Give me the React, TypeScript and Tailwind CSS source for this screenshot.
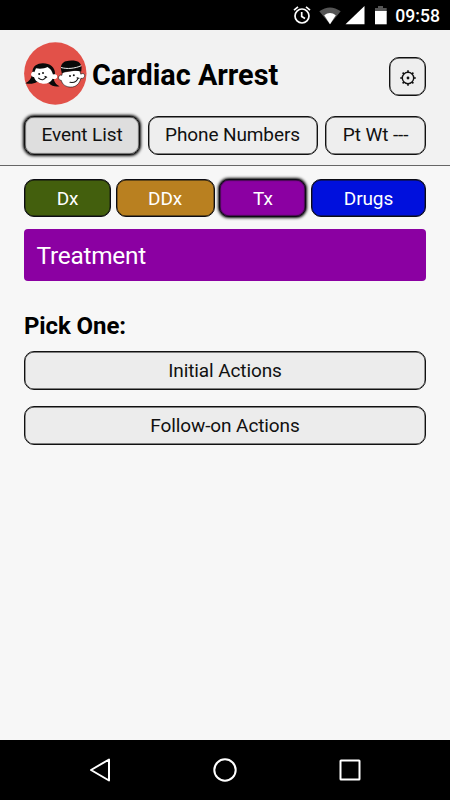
import { clsx } from "clsx";

const navTabs = [
  { label: "Event List", width: "w-[116px]", active: true },
  { label: "Phone Numbers", width: "w-[170px]", active: false },
  { label: "Pt Wt ---", width: "w-[101px]", active: false },
];

const sections = [
  { label: "Dx", className: "w-[87px] bg-[#435f0d]", active: false },
  { label: "DDx", className: "w-[99px] bg-[#b98020]", active: false },
  { label: "Tx", className: "w-[87px] bg-[#8b00a2]", active: true },
  { label: "Drugs", className: "w-[115px] bg-[#0010dd]", active: false },
];

const actions = ["Initial Actions", "Follow-on Actions"];

const baseShadow = "shadow-[inset_0_0_0_0.4px_#111]";
const activeShadow = "shadow-[0_0_3px_1px_#000,inset_0_0_1px_0.5px_#111]";

function StatusBar() {
  return (
    <div className="flex h-[30px] shrink-0 items-center justify-end bg-black pr-[10px] text-white">
      <svg width="96" height="30" viewBox="0 0 96 30" className="mr-[8px]">
        <g fill="none" stroke="#fff" strokeWidth="1.7">
          <circle cx="11" cy="16" r="7" />
          <path d="M10.7 12v4.5l3.3 2M3 10.2l4-3.3M19 10.2l-4-3.3" />
        </g>
        <path d="M28.3 11.3Q39 3.5 49.700 11.3L39 24.3Z" fill="#555" />
        <path d="M33.2 15.2Q39 11 44.800 15.2L39 24.3Z" fill="#fff" />
        <path d="M54.5 24.3L73.5 6v18.3z" fill="#fff" />
        <path d="M84 8h3V6h5v2h3.700v4H84z" fill="#555" />
        <path d="M84 11h11.700v13.3H84z" fill="#fff" />
      </svg>
      <span className="pt-[2px] text-[17.6px] leading-[28px] font-medium">09:58</span>
    </div>
  );
}

function Logo() {
  return (
    <svg width="63" height="63" viewBox="0 0 63 63" className="shrink-0">
      <circle cx="31.3" cy="31.5" r="31.2" fill="#e25149" />
      <path
        d="M8.500 29C9 24 13.500 21.200 19 21.300c7 0 12 4 12 10l-1 7c1 3 3 5 5.600 6-4 .8-8 0-10.600-3L13 40c-3 1.700-7 2.300-11.700 1.200C5 39.500 7.500 36.500 7.800 33z"
        fill="#090909"
      />
      <path
        d="M12 26.300c4.500.8 8.500.2 11.500-1.300 3 1.800 4.600 4 5.500 7.600 2.400-1 4.600.2 4.200 2.500-.4 2-2.600 2.400-4.600 1.700-2 3.800-5.600 5.300-9.800 4.900-4.600-.4-7.800-2.800-8.800-6.600-2.500-.4-3.600-2.500-2.500-4.200.7-1.100 2-1.300 2.800-.7z"
        fill="#fff"
      />
      <path
        d="M38.500 30.200c5.500-.6 11.500-1.600 17-3l1.300 5c2.200-1.500 4.400-.2 3.700 2.200-.5 1.700-2 2.400-3.600 1.900-1.400 5.700-5.200 8.900-10.200 8.800-4.800-.1-8.400-2.500-9.400-6.700-2.200.1-3.500-2.200-2.300-4.200.7-1.100 1.900-1.400 2.800-.8z"
        fill="#fff"
        stroke="#090909"
        strokeWidth=".6"
      />
      <path
        d="M36.800 26.500c0-3.500 2-6.500 5.200-7.200 3.500-.9 7-.8 10-.3 3.500.6 5.200 3 5.600 6.300l-.3 4.200c-6-1.300-13-.8-19.500 1.700z"
        fill="#090909"
      />
      <path d="M37 25.500c6 1.800 14 1 20.300-1.800" fill="none" stroke="#eee" strokeWidth="1" />
      <g fill="none" stroke="#111" strokeWidth="1.100" strokeLinecap="round">
        <path d="M14.600 36.200c2.600 2.500 6 2 7.400-1.400M21 34.400l1.700.8" />
        <path d="M46 40.300c4 .6 7-1 8-4.200M53 35.800l2 .4" />
      </g>
      <g fill="#111">
        <circle cx="15.200" cy="32" r="1" />
        <circle cx="19" cy="31" r="1" />
        <circle cx="46" cy="33.900" r="1" />
        <circle cx="49.800" cy="33.200" r="1" />
      </g>
    </svg>
  );
}

function GearIcon() {
  return (
    <svg width="18" height="18" viewBox="0 0 18 18" stroke="#111" fill="none">
      <circle cx="9" cy="9" r="5.700" strokeWidth="1.400" />
      <path
        d="M9 1.200v2.200M9 14.600v2.200M1.200 9h2.200M14.600 9h2.200M3.600 3.600l1.500 1.500M12.900 12.900l1.500 1.500M3.600 14.400l1.500-1.500M12.900 5.100l1.500-1.500"
        strokeWidth="1.600"
      />
      <circle cx="9" cy="9" r="1.400" fill="#111" stroke="none" />
    </svg>
  );
}

function Header() {
  return (
    <header className="h-[136px] shrink-0 border-b border-[#666] bg-[#f2f2f2] px-6 pt-3">
      <div className="flex h-[63px] items-center">
        <Logo />
        <h1 className="ml-[5px] pt-[3px] text-[28.8px] leading-8 font-bold text-black">Cardiac Arrest</h1>
        <button
          className={clsx(
            "mt-[6px] ml-auto flex h-[39px] w-[37px] items-center justify-center rounded-[10px] border border-[#111] bg-[#eee] pt-[2px]",
            baseShadow,
          )}
        >
          <GearIcon />
        </button>
      </div>
      <nav className="mt-[11px] flex justify-between">
        {navTabs.map((tab) => (
          <button
            key={tab.label}
            className={clsx(
              "h-[39px] rounded-[10px] border border-[#111] text-[19px] tracking-[-0.1px] whitespace-nowrap",
              tab.width,
              tab.active ? ["bg-[#dedede]", activeShadow] : ["bg-[#eee]", baseShadow],
            )}
          >
            {tab.label}
          </button>
        ))}
      </nav>
    </header>
  );
}

export default function App() {
  return (
    <div className="flex h-[800px] w-[450px] flex-col overflow-hidden bg-[#f7f7f7] font-[Roboto,sans-serif] text-[#111]">
      <StatusBar />
      <Header />
      <main className="flex-1 px-6 pt-[13px]">
        <div className="flex justify-between">
          {sections.map((section) => (
            <button
              key={section.label}
              className={clsx(
                "h-[38px] rounded-[10px] border border-[#0c0c14] pt-[2px] text-[19px] tracking-[-0.1px] text-white",
                section.className,
                section.active ? activeShadow : baseShadow,
              )}
            >
              {section.label}
            </button>
          ))}
        </div>
        <div className="mt-3 flex h-[52px] items-center rounded-[4px] bg-[#8b00a2] px-[12.5px] pt-[2px] text-[24.4px] tracking-[-0.25px] text-white">
          Treatment
        </div>
        <h2 className="mt-[28px] pt-[2px] text-[24px] leading-[30px] font-bold tracking-[-0.1px] text-black">
          Pick One:
        </h2>
        <div className="mt-[10px] flex flex-col gap-4">
          {actions.map((action) => (
            <button
              key={action}
              className={clsx(
                "h-[39px] rounded-[10px] border border-[#111] bg-[#ececec] pt-[1px] text-[19px] tracking-[-0.1px]",
                baseShadow,
              )}
            >
              {action}
            </button>
          ))}
        </div>
      </main>
      <footer className="flex h-[60px] shrink-0 items-center justify-center bg-black">
        <svg width="274" height="26" viewBox="0 0 274 26" fill="none" stroke="#fff" strokeWidth="2">
          <path d="M3 13L21 2.500v21z" strokeLinejoin="round" />
          <circle cx="137" cy="13" r="10.700" />
          <rect x="252.500" y="3.500" width="19" height="19" rx=".5" />
        </svg>
      </footer>
    </div>
  );
}
